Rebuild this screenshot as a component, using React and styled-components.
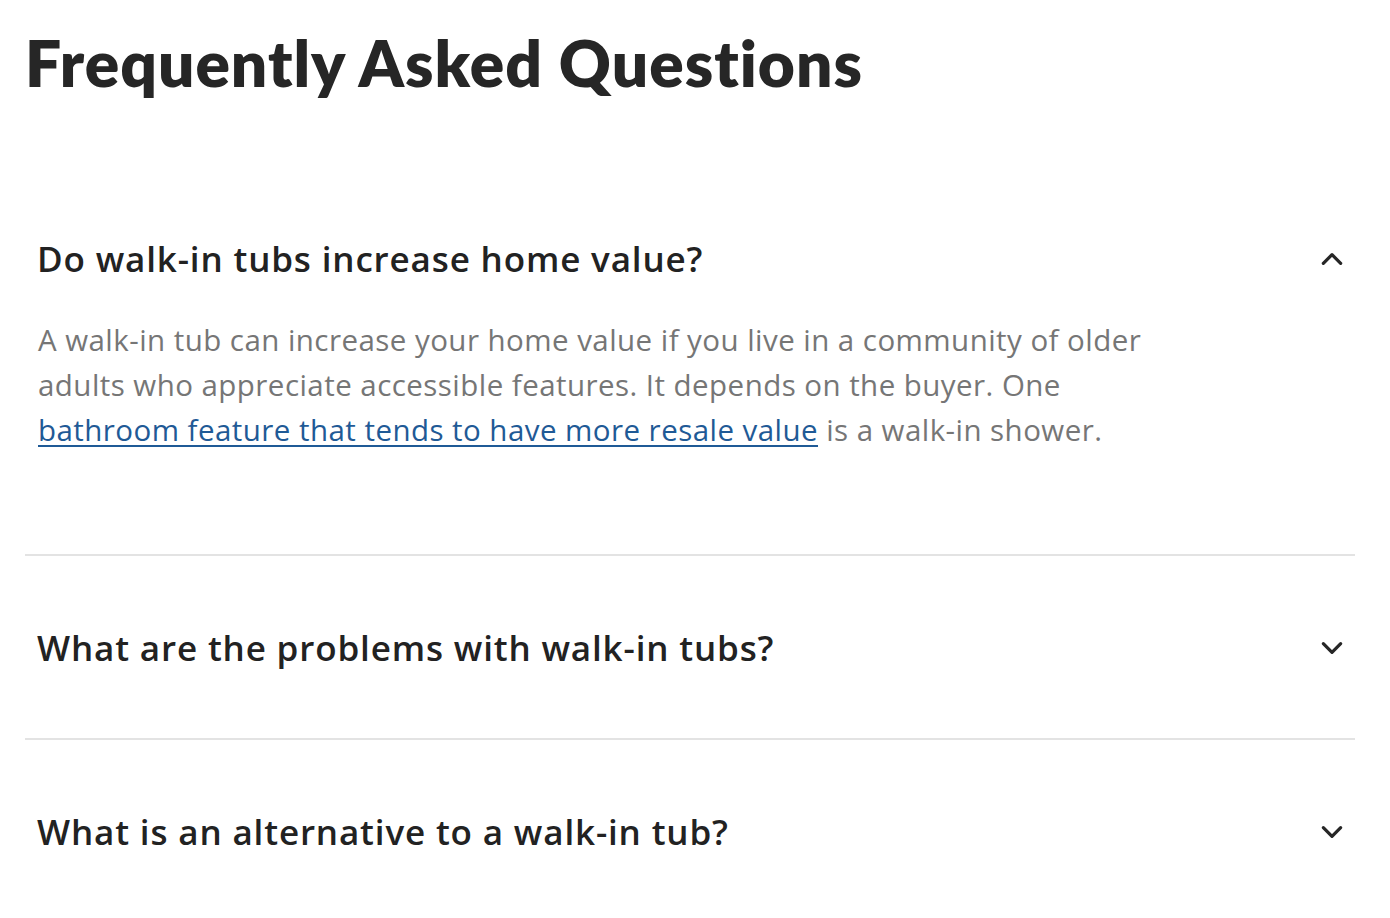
import { useState } from "react";
import styled, { createGlobalStyle } from "styled-components";

const GlobalStyle = createGlobalStyle`
  html, body {
    margin: 0;
    padding: 0;
    background: #fff;
  }
  body {
    font-family: "Open Sans", "Noto Sans", sans-serif;
    color: #262626;
  }
`;

export const Page = styled.div`
  padding: 25px 35px 0 25px;
`;

export const Title = styled.h2`
  margin: 0;
  font-family: Lato, "Noto Sans", sans-serif;
  font-size: 64px;
  line-height: 76px;
  font-weight: 800;
  letter-spacing: 1px;
  color: #262626;
`;

export const List = styled.div`
  margin-top: 66px;
`;

export const Item = styled.div`
  border-bottom: ${(props) => (props.$last ? "none" : "2px solid #e3e3e3")};
`;

export const Question = styled.button`
  width: 100%;
  display: flex;
  align-items: center;
  justify-content: space-between;
  padding: 70px 10px 68px 12px;
  border: 0;
  background: none;
  cursor: pointer;
  font-family: inherit;
  font-size: 35px;
  line-height: 44px;
  font-weight: 600;
  letter-spacing: 0.85px;
  color: #222;
  text-align: left;
`;

export const Answer = styled.div`
  padding: 0 12px 102px 13px;
  max-width: 1160px;
  margin-top: -32px;
  font-size: 29.5px;
  line-height: 45px;
  letter-spacing: 0.45px;
  color: #767676;

  a {
    color: #1f5a96;
    text-decoration: underline;
    text-decoration-thickness: 2px;
    text-underline-offset: 4px;
  }
`;

const Chevron = ({ up }) => (
  <svg width="26" height="26" viewBox="0 0 24 24" fill="none">
    <path
      d={up ? "M4 16l8-8 8 8" : "M4 8l8 8 8-8"}
      stroke="#262626"
      strokeWidth="3"
      strokeLinecap="round"
      strokeLinejoin="round"
    />
  </svg>
);

const items = [
  {
    id: 1,
    q: "Do walk-in tubs increase home value?",
    a: (
      <>
        A walk-in tub can increase your home value if you live in a community
        of older adults who appreciate accessible features. It depends on the
        buyer. One{" "}
        <a href="#">bathroom feature that tends to have more resale value</a>{" "}
        is a walk-in shower.
      </>
    ),
  },
  { id: 2, q: "What are the problems with walk-in tubs?", a: null },
  { id: 3, q: "What is an alternative to a walk-in tub?", a: null },
];

const App = () => {
  const [open, setOpen] = useState(1);

  return (
    <>
      <GlobalStyle />
      <Page>
        <Title>Frequently Asked Questions</Title>
        <List>
          {items.map(({ id, q, a }, i) => (
            <Item key={id} $last={i === items.length - 1}>
              <Question onClick={() => setOpen((prev) => (prev === id ? 0 : id))}>
                <span>{q}</span>
                <Chevron up={open === id} />
              </Question>
              {open === id && a && <Answer>{a}</Answer>}
            </Item>
          ))}
        </List>
      </Page>
    </>
  );
};

export default App;
